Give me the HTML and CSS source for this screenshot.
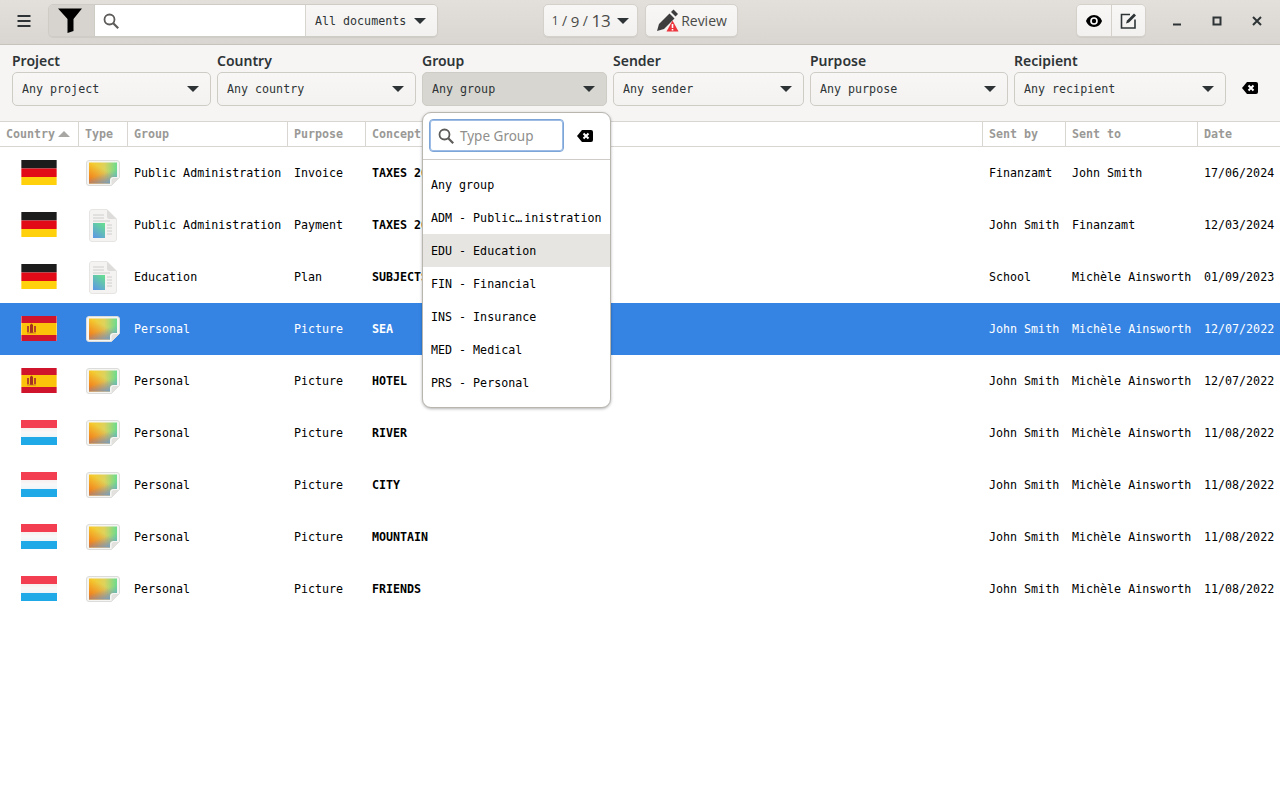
FILE: index.html
```html
<!DOCTYPE html>
<html lang="en">
<head>
  <meta charset="UTF-8" />
  <title>Documents</title>
  <link rel="stylesheet" href="styles.css">
</head>
<body>
  <svg class="defs" width="0" height="0">
    <defs>
      <linearGradient id="picBase" x1="0" y1="0" x2="1" y2="0">
        <stop offset="0.1" stop-color="#f6cb2c" />
        <stop offset="0.55" stop-color="#dfd25c" />
        <stop offset="1" stop-color="#6bdc8e" />
      </linearGradient>
      <linearGradient id="picOrange" x1="0" y1="1" x2="0.5" y2="0.3">
        <stop offset="0" stop-color="#ee6a1c" />
        <stop offset="1" stop-color="#ee6a1c" stop-opacity="0" />
      </linearGradient>
      <linearGradient id="picBlue" x1="0.9" y1="1" x2="0.65" y2="0.45">
        <stop offset="0" stop-color="#6a9fd0" />
        <stop offset="1" stop-color="#6a9fd0" stop-opacity="0" />
      </linearGradient>
      <linearGradient id="docThumb" x1="0.8" y1="0" x2="0.2" y2="1">
        <stop offset="0" stop-color="#66dc92" />
        <stop offset="1" stop-color="#5e9ae2" />
      </linearGradient>
      <linearGradient id="luWhite" x1="0" y1="0" x2="0" y2="1">
        <stop offset="0" stop-color="#f6dfe2" />
        <stop offset="0.5" stop-color="#f8f8f8" />
        <stop offset="1" stop-color="#dff0f8" />
      </linearGradient>
      <symbol id="flag-de" viewBox="0 0 36 25">
        <rect width="36" height="8.500" fill="#1c1c1c" />
        <rect y="8.500" width="36" height="8.500" fill="#e30a17" />
        <rect y="17" width="36" height="8" fill="#ffd00c" />
        <rect width="1" height="25" fill="#fff" opacity="0.35" />
        <rect x="35" width="1" height="25" fill="#fff" opacity="0.35" />
      </symbol>
      <symbol id="flag-es" viewBox="0 0 36 25">
        <rect width="36" height="25" fill="#cf142b" />
        <rect y="7" width="36" height="12" fill="#fcc30b" />
        <path d="M6 10h2v6h-2zM13 10h2v6h-2z" fill="#b5432a" />
        <path d="M9 9l1.500-1.500 1.500 1.500v8h-3z" fill="#a3331f" />
        <path d="M6 16.500h9v.800h-9z" fill="#c0602a" />
        <rect width="1" height="25" fill="#fff" opacity="0.35" />
        <rect x="35" width="1" height="25" fill="#fff" opacity="0.35" />
      </symbol>
      <symbol id="flag-lu" viewBox="0 0 36 25">
        <rect width="36" height="25" fill="url(#luWhite)" />
        <rect width="36" height="8" fill="#f33d50" />
        <rect y="17" width="36" height="8" fill="#1fa9e6" />
      </symbol>
      <symbol id="type-pic" viewBox="0 0 34 26">
        <path d="M3 .5h28a2.500 2.500 0 0 1 2.500 2.500v14.500l-8 8h-22.500a2.500 2.500 0 0 1-2.500-2.500v-20a2.500 2.500 0 0 1 2.500-2.500z" fill="#f5f5f4" stroke="#dcdcda" />
        <path d="M3 2.500h28v14.500h-4a3 3 0 0 0-3 3v3.500h-21z" fill="url(#picBase)" />
        <path d="M3 2.500h28v14.500h-4a3 3 0 0 0-3 3v3.500h-21z" fill="url(#picOrange)" />
        <path d="M3 2.500h28v14.500h-4a3 3 0 0 0-3 3v3.500h-21z" fill="url(#picBlue)" />
        <path d="M33 18l-7.500 7.500v-5a2.500 2.500 0 0 1 2.500-2.500z" fill="#e2e1de" />
      </symbol>
      <symbol id="type-doc" viewBox="0 0 28 33">
        <path d="M3 .5h15l9.500 9.500v20a2.500 2.500 0 0 1-2.500 2.500h-22a2.500 2.500 0 0 1-2.500-2.500v-27a2.500 2.500 0 0 1 2.500-2.500z" fill="#f4f3f2" stroke="#e6e5e3" />
        <path d="M18 .5v7a2.500 2.500 0 0 0 2.500 2.500h7z" fill="#dddcda" />
        <path d="M4 6h11M4 9h11M4 12h17M18 16h5M18 19h5M18 22h5M18 25h5" stroke="#cfcecc" stroke-width="1" fill="none" />
        <rect x="4" y="14" width="12" height="15" fill="url(#docThumb)" />
      </symbol>
      <symbol id="clear" viewBox="0 0 16 12">
        <path d="M5 0h9a2 2 0 0 1 2 2v8a2 2 0 0 1-2 2h-9l-5-6z" fill="#000" />
        <path d="M6.500 3.500l5 5m0-5l-5 5" stroke="#fff" stroke-width="2" fill="none" />
      </symbol>
      <symbol id="loupe" viewBox="0 0 16 16">
        <circle cx="6.500" cy="6.500" r="5" fill="none" stroke="currentColor" stroke-width="1.800" />
        <path d="M10.200 10.200l5 5" stroke="currentColor" stroke-width="2.200" fill="none" />
      </symbol>
    </defs>
  </svg>

  <header class="topbar">
    <div class="topbar-left">
      <button class="flat-btn menu-btn" type="button">
        <svg width="16" height="14" viewBox="0 0 16 14"><path d="M1.500 2h13M1.500 7h13M1.500 12h13" stroke="#2e3436" stroke-width="2" fill="none" /></svg>
      </button>
      <div class="search-group">
        <button class="filter-btn" type="button">
          <svg width="24" height="25" viewBox="0 0 24 25"><path d="M0 .5h24l-8.500 10.500v12l-6 2v-14z" fill="#000" /></svg>
        </button>
        <div class="search-entry">
          <svg class="loupe-icon" width="16" height="16"><use href="#loupe" /></svg>
        </div>
        <button class="docs-btn" type="button">All documents<span class="caret"></span></button>
      </div>
    </div>

    <div class="topbar-center">
      <button class="pill counter-btn" type="button"><span class="num-s">1</span> / <span class="num-m">9</span> / <span class="num-l">13</span> <span class="caret"></span></button>
      <button class="pill review-btn" type="button">
        <svg width="24" height="24" viewBox="0 0 24 24">
          <path d="M1 22l2-7L13.500 4.500l5 5L8 20z" fill="#3d3d3d" />
          <path d="M15 3l2.500-2.500 4.500 4.500-2.500 2.500z" fill="#3d3d3d" />
          <path d="M16.500 11.500l6 11h-12z" fill="#ed333b" />
          <path d="M16.500 15v4M16.500 20v1.500" stroke="#fff" stroke-width="1.600" fill="none" />
        </svg>
        Review
      </button>
    </div>

    <div class="topbar-right">
      <div class="view-group">
        <button class="view-btn" type="button">
          <svg width="16" height="12" viewBox="0 0 16 12"><path d="M8 0c4 0 7 3 8 6-1 3-4 6-8 6s-7-3-8-6c1-3 4-6 8-6z" fill="#000" /><circle cx="8" cy="6" r="3.800" fill="#fff" /><circle cx="8" cy="6" r="2.200" fill="#000" /></svg>
        </button>
        <button class="view-btn" type="button">
          <svg width="17" height="17" viewBox="0 0 17 17"><path d="M10 2.500h-8.500v13.500h13.500v-8.500" stroke="#2e3436" stroke-width="1.600" fill="none" /><path d="M6 11.500l1-3 7-7 2 2-7 7z" fill="#2e3436" /></svg>
        </button>
      </div>
      <div class="win-controls">
        <button class="win-btn" type="button"><svg width="10" height="10" viewBox="0 0 10 10"><path d="M1 8.500h8" stroke="#2e3436" stroke-width="2" /></svg></button>
        <button class="win-btn" type="button"><svg width="10" height="10" viewBox="0 0 10 10"><rect x="1.500" y="1.500" width="7" height="7" fill="none" stroke="#2e3436" stroke-width="2" /></svg></button>
        <button class="win-btn" type="button"><svg width="10" height="10" viewBox="0 0 10 10"><path d="M1 1l8 8m0-8l-8 8" stroke="#2e3436" stroke-width="2" /></svg></button>
      </div>
    </div>
  </header>

  <section class="filters">
    <div class="filter">
      <label>Project</label>
      <div class="combo"><span>Any project</span><span class="caret"></span></div>
    </div>
    <div class="filter">
      <label>Country</label>
      <div class="combo"><span>Any country</span><span class="caret"></span></div>
    </div>
    <div class="filter filter-open">
      <label>Group</label>
      <div class="combo combo-active"><span>Any group</span><span class="caret"></span></div>

      <div class="popover">
        <div class="popover-search">
          <div class="popover-entry">
            <svg class="popover-loupe" width="16" height="16"><use href="#loupe" /></svg>
            <span>Type Group</span>
          </div>
          <svg class="popover-clear" width="16" height="12"><use href="#clear" /></svg>
        </div>
        <ul class="popover-list">
          <li>Any group</li>
          <li>ADM - Public…<span class="elided">inistration</span></li>
          <li class="hover">EDU - Education</li>
          <li>FIN - Financial</li>
          <li>INS - Insurance</li>
          <li>MED - Medical</li>
          <li>PRS - Personal</li>
        </ul>
      </div>
    </div>
    <div class="filter">
      <label>Sender</label>
      <div class="combo"><span>Any sender</span><span class="caret"></span></div>
    </div>
    <div class="filter">
      <label>Purpose</label>
      <div class="combo"><span>Any purpose</span><span class="caret"></span></div>
    </div>
    <div class="filter">
      <label>Recipient</label>
      <div class="combo"><span>Any recipient</span><span class="caret"></span></div>
    </div>
    <svg class="filters-clear" width="16" height="12"><use href="#clear" /></svg>
  </section>

  <table class="docs">
    <colgroup>
      <col class="c-country"><col class="c-type"><col class="c-group"><col class="c-purpose"><col class="c-concept"><col class="c-from"><col class="c-to"><col class="c-date">
    </colgroup>
    <thead>
      <tr>
        <th>Country<span class="sort-up"></span></th><th>Type</th><th>Group</th><th>Purpose</th><th>Concept</th><th>Sent by</th><th>Sent to</th><th>Date</th>
      </tr>
    </thead>
    <tbody>
      <tr>
        <td class="icon"><svg class="flag"><use href="#flag-de" /></svg></td>
        <td class="icon"><svg class="pic"><use href="#type-pic" /></svg></td>
        <td>Public Administration</td><td>Invoice</td><td class="concept">TAXES 2024</td><td>Finanzamt</td><td>John Smith</td><td>17/06/2024</td>
      </tr>
      <tr>
        <td class="icon"><svg class="flag"><use href="#flag-de" /></svg></td>
        <td class="icon"><svg class="doc"><use href="#type-doc" /></svg></td>
        <td>Public Administration</td><td>Payment</td><td class="concept">TAXES 2023</td><td>John Smith</td><td>Finanzamt</td><td>12/03/2024</td>
      </tr>
      <tr>
        <td class="icon"><svg class="flag"><use href="#flag-de" /></svg></td>
        <td class="icon"><svg class="doc"><use href="#type-doc" /></svg></td>
        <td>Education</td><td>Plan</td><td class="concept">SUBJECTS</td><td>School</td><td>Michèle Ainsworth</td><td>01/09/2023</td>
      </tr>
      <tr class="selected">
        <td class="icon"><svg class="flag"><use href="#flag-es" /></svg></td>
        <td class="icon"><svg class="pic"><use href="#type-pic" /></svg></td>
        <td>Personal</td><td>Picture</td><td class="concept">SEA</td><td>John Smith</td><td>Michèle Ainsworth</td><td>12/07/2022</td>
      </tr>
      <tr>
        <td class="icon"><svg class="flag"><use href="#flag-es" /></svg></td>
        <td class="icon"><svg class="pic"><use href="#type-pic" /></svg></td>
        <td>Personal</td><td>Picture</td><td class="concept">HOTEL</td><td>John Smith</td><td>Michèle Ainsworth</td><td>12/07/2022</td>
      </tr>
      <tr>
        <td class="icon"><svg class="flag"><use href="#flag-lu" /></svg></td>
        <td class="icon"><svg class="pic"><use href="#type-pic" /></svg></td>
        <td>Personal</td><td>Picture</td><td class="concept">RIVER</td><td>John Smith</td><td>Michèle Ainsworth</td><td>11/08/2022</td>
      </tr>
      <tr>
        <td class="icon"><svg class="flag"><use href="#flag-lu" /></svg></td>
        <td class="icon"><svg class="pic"><use href="#type-pic" /></svg></td>
        <td>Personal</td><td>Picture</td><td class="concept">CITY</td><td>John Smith</td><td>Michèle Ainsworth</td><td>11/08/2022</td>
      </tr>
      <tr>
        <td class="icon"><svg class="flag"><use href="#flag-lu" /></svg></td>
        <td class="icon"><svg class="pic"><use href="#type-pic" /></svg></td>
        <td>Personal</td><td>Picture</td><td class="concept">MOUNTAIN</td><td>John Smith</td><td>Michèle Ainsworth</td><td>11/08/2022</td>
      </tr>
      <tr>
        <td class="icon"><svg class="flag"><use href="#flag-lu" /></svg></td>
        <td class="icon"><svg class="pic"><use href="#type-pic" /></svg></td>
        <td>Personal</td><td>Picture</td><td class="concept">FRIENDS</td><td>John Smith</td><td>Michèle Ainsworth</td><td>11/08/2022</td>
      </tr>
    </tbody>
  </table>
</body>
</html>
```

FILE: styles.css
```css
* {
  box-sizing: border-box;
}

html, body {
  margin: 0;
  height: 100%;
  overflow: hidden;
}

body {
  background-color: #fff;
  color: #000;
  font-family: 'DejaVu Sans Mono', monospace;
  font-size: 11.67px;
}

button {
  font: inherit;
  color: #2e3436;
  border: none;
  background: none;
  padding: 0;
}

.defs {
  display: block;
  height: 0;
}

.caret {
  display: inline-block;
  width: 0;
  height: 0;
  border-left: 6px solid transparent;
  border-right: 6px solid transparent;
  border-top: 6.500px solid #2e3436;
}

/* top bar */
.topbar {
  height: 45px;
  padding: 4px 0 7px;
  display: grid;
  grid-template-columns: 543px auto 1fr;
  background: linear-gradient(#e3e0dc, #d9d6d1);
  border-bottom: 1px solid #c6c2bc;
}

.topbar-left,
.topbar-center,
.topbar-right {
  display: flex;
  align-items: stretch;
}

.menu-btn {
  width: 48px;
  display: flex;
  align-items: center;
  justify-content: center;
}

.search-group {
  display: flex;
  width: 390px;
  border: 1px solid #cfccc6;
  border-radius: 5px;
  overflow: hidden;
  box-shadow: 0 1px 1px rgba(0, 0, 0, 0.06);
}

.filter-btn {
  width: 46px;
  padding: 0 3px 0 0;
  background-color: #d7d4cf;
  border-right: 1px solid #cfccc6;
  display: flex;
  align-items: center;
  justify-content: center;
}

.search-entry {
  width: 211px;
  background-color: #fff;
  border-right: 1px solid #d8d5d0;
  display: flex;
  align-items: center;
  padding-left: 8px;
  color: #5e5c5a;
}

.docs-btn {
  flex: 1;
  background: linear-gradient(#f8f7f6, #f2f1ef);
  display: flex;
  align-items: center;
  padding-left: 9px;
  gap: 8px;
}

.topbar-center {
  gap: 7px;
}

.pill {
  border: 1px solid #d4d1cb;
  border-radius: 5px;
  background: linear-gradient(#f8f7f6, #f2f1ef);
  font-family: 'Open Sans', sans-serif;
  box-shadow: 0 1px 1px rgba(0, 0, 0, 0.05);
  display: flex;
  align-items: center;
}

.counter-btn {
  width: 95px;
  justify-content: center;
  gap: 3.500px;
  font-size: 14px;
  color: #4a4a48;
}

.num-s {
  font-size: 12px;
}

.num-m {
  font-size: 15px;
}

.num-l {
  font-size: 17px;
}

.counter-btn .caret {
  margin-left: 3px;
}

.review-btn {
  width: 93px;
  justify-content: center;
  gap: 1px;
  font-size: 14px;
  color: #4a4a48;
}

.topbar-right {
  justify-content: flex-end;
}

.view-group {
  display: flex;
  border: 1px solid #d4d1cb;
  border-radius: 5px;
  overflow: hidden;
  box-shadow: 0 1px 1px rgba(0, 0, 0, 0.05);
  margin-right: 11px;
}

.view-btn {
  width: 34px;
  background: linear-gradient(#f8f7f6, #f2f1ef);
  display: flex;
  align-items: center;
  justify-content: center;
}

.view-btn + .view-btn {
  border-left: 1px solid #d4d1cb;
}

.win-controls {
  display: flex;
  padding-right: 3px;
}

.win-btn {
  width: 40px;
  display: flex;
  align-items: center;
  justify-content: center;
}

/* filters */
.filters {
  height: 77px;
  padding: 6px 0 0 12px;
  display: grid;
  grid-template-columns: 199px 199px 185px 191px 198px 212px 1fr;
  column-gap: 6px;
  background-color: #f6f5f4;
  border-bottom: 1px solid #d9d6d1;
}

.filter {
  position: relative;
}

.filter label {
  display: block;
  height: 21px;
  font-family: 'Noto Sans', sans-serif;
  font-size: 14px;
  font-weight: 600;
  line-height: 20px;
  color: #2e3436;
}

.combo {
  height: 34px;
  padding: 0 11px 0 9px;
  display: flex;
  align-items: center;
  justify-content: space-between;
  color: #2e3436;
  background: linear-gradient(#f8f7f6, #f3f2f0);
  border: 1px solid #cfccc6;
  border-radius: 5px;
}

.combo-active {
  background: #d8d6d0;
}

.filters-clear {
  margin: 31px 0 0 10px;
  align-self: start;
}

/* group popover */
.popover {
  position: absolute;
  z-index: 5;
  top: 61px;
  left: 0;
  width: 189px;
  height: 296px;
  background-color: #fff;
  border: 1px solid #b9b6b0;
  border-radius: 9px;
  box-shadow: 0 1px 3px rgba(0, 0, 0, 0.3);
  overflow: hidden;
}

.popover-search {
  height: 47px;
  padding: 6px 6px 0;
  display: flex;
  border-bottom: 1px solid #cfccc8;
}

.popover-entry {
  width: 135px;
  height: 33px;
  display: flex;
  align-items: center;
  gap: 6px;
  padding-left: 8px;
  border: 1px solid #7ea5d8;
  border-radius: 4px;
  box-shadow: inset 0 0 0 1px #9dbde6;
  color: #5e5c5a;
  font-family: 'Noto Sans', sans-serif;
  font-size: 13.500px;
}

.popover-entry span {
  color: #8f8f8d;
}

.popover-clear {
  margin: 11px 0 0 13px;
}

.popover-list {
  list-style: none;
  margin: 8px 0 0;
  padding: 0;
}

.popover-list li {
  height: 33px;
  line-height: 35px;
  padding-left: 8px;
  white-space: nowrap;
}

.popover-list .elided {
  margin-left: 2px;
}

.popover-list .hover {
  background-color: #e6e5e1;
}

/* document table */
.docs {
  width: 1280px;
  table-layout: fixed;
  border-collapse: separate;
  border-spacing: 0;
}

.c-country { width: 79px; }
.c-type { width: 49px; }
.c-group { width: 160px; }
.c-purpose { width: 78px; }
.c-concept { width: 617px; }
.c-from { width: 83px; }
.c-to { width: 132px; }
.c-date { width: 82px; }

.docs th {
  height: 25px;
  padding: 0 6px;
  text-align: left;
  font-weight: bold;
  font-size: 11.67px;
  color: #9a9996;
  border-bottom: 1px solid #d9d6d1;
  border-right: 1px solid #d9d6d1;
  white-space: nowrap;
}

.docs th:last-child {
  border-right: none;
}

.sort-up {
  display: inline-block;
  width: 0;
  height: 0;
  margin-left: 3px;
  border-left: 6px solid transparent;
  border-right: 6px solid transparent;
  border-bottom: 6px solid #a8a7a4;
  vertical-align: 1px;
}

.docs td {
  height: 52px;
  padding: 0 6px;
  white-space: nowrap;
  overflow: hidden;
}

.docs td.icon {
  padding: 0;
  text-align: center;
}

.docs .concept {
  font-weight: bold;
}

.docs .selected td {
  background-color: #3584e4;
  color: #fff;
}

.flag {
  display: block;
  width: 36px;
  height: 25px;
  margin: 0 0 1px 21px;
  filter: blur(0.3px);
}

.pic {
  display: block;
  width: 34px;
  height: 26px;
  margin: 0 0 0 7px;
  filter: blur(0.3px);
}

.doc {
  display: block;
  width: 28px;
  height: 33px;
  margin: 0 0 0 10px;
  filter: blur(0.3px);
}
```
